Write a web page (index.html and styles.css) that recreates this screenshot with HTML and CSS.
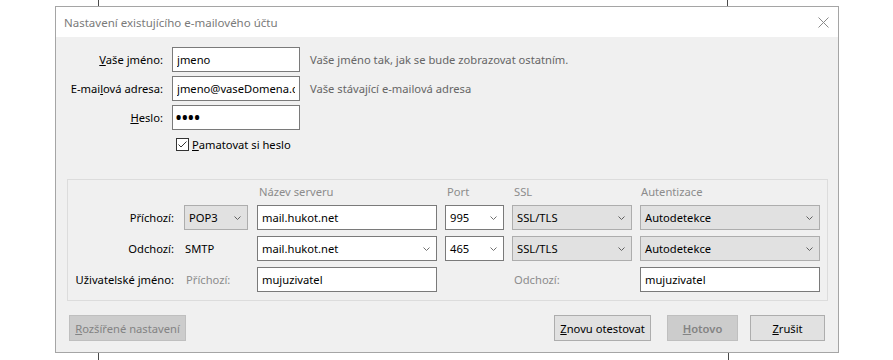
FILE: index.html
```html
<!DOCTYPE html>
<html lang="cs">
<head>
    <meta charset="UTF-8">
    <title>Nastavení existujícího e-mailového účtu</title>
    <link rel="stylesheet" href="styles.css">
</head>
<body>
    <div class="dialog">
        <div class="titlebar">
            <span class="title">Nastavení existujícího e-mailového účtu</span>
            <svg class="close" width="11" height="11" viewBox="0 0 11 11">
                <path d="M0.5 0.5 L10.5 10.5 M10.5 0.5 L0.5 10.5" stroke="#8a8a8a" stroke-width="1" fill="none"/>
            </svg>
        </div>
        <div class="content">
            <div class="account">
                <label class="label"><u>V</u>aše jméno:</label>
                <input class="field" type="text" value="jmeno">
                <span class="hint">Vaše jméno tak, jak se bude zobrazovat ostatním.</span>

                <label class="label">E-mai<u>l</u>ová adresa:</label>
                <input class="field" type="text" value="jmeno@vaseDomena.cz">
                <span class="hint">Vaše stávající e-mailová adresa</span>

                <label class="label"><u>H</u>eslo:</label>
                <input class="field password" type="password" value="1234">
                <span></span>

                <span></span>
                <label class="remember">
                    <span class="check">
                        <svg width="11" height="11" viewBox="0 0 11 11">
                            <path d="M1.5 5.5 L4 8 L9.5 2.5" stroke="#333" stroke-width="1" fill="none"/>
                        </svg>
                    </span>
                    <span><u>P</u>amatovat si heslo</span>
                </label>
                <span></span>
            </div>

            <div class="servers">
                <span></span>
                <span></span>
                <span class="head">Název serveru</span>
                <span class="head">Port</span>
                <span class="head">SSL</span>
                <span class="head auth">Autentizace</span>

                <span class="row-label">Příchozí:</span>
                <div class="select narrow">POP3<svg class="chevron" width="7" height="4" viewBox="0 0 7 4"><path d="M0.5 0.5 L3.5 3.5 L6.5 0.5" stroke="#606060" fill="none"/></svg></div>
                <input class="field" type="text" value="mail.hukot.net">
                <div class="select combo">995<svg class="chevron" width="7" height="4" viewBox="0 0 7 4"><path d="M0.5 0.5 L3.5 3.5 L6.5 0.5" stroke="#606060" fill="none"/></svg></div>
                <div class="select">SSL/TLS<svg class="chevron" width="7" height="4" viewBox="0 0 7 4"><path d="M0.5 0.5 L3.5 3.5 L6.5 0.5" stroke="#606060" fill="none"/></svg></div>
                <div class="select">Autodetekce<svg class="chevron" width="7" height="4" viewBox="0 0 7 4"><path d="M0.5 0.5 L3.5 3.5 L6.5 0.5" stroke="#606060" fill="none"/></svg></div>

                <span class="row-label">Odchozí:</span>
                <span class="plain">SMTP</span>
                <div class="select combo">mail.hukot.net<svg class="chevron" width="7" height="4" viewBox="0 0 7 4"><path d="M0.5 0.5 L3.5 3.5 L6.5 0.5" stroke="#606060" fill="none"/></svg></div>
                <div class="select combo">465<svg class="chevron" width="7" height="4" viewBox="0 0 7 4"><path d="M0.5 0.5 L3.5 3.5 L6.5 0.5" stroke="#606060" fill="none"/></svg></div>
                <div class="select">SSL/TLS<svg class="chevron" width="7" height="4" viewBox="0 0 7 4"><path d="M0.5 0.5 L3.5 3.5 L6.5 0.5" stroke="#606060" fill="none"/></svg></div>
                <div class="select">Autodetekce<svg class="chevron" width="7" height="4" viewBox="0 0 7 4"><path d="M0.5 0.5 L3.5 3.5 L6.5 0.5" stroke="#606060" fill="none"/></svg></div>

                <span class="row-label">Uživatelské jméno:</span>
                <span class="plain muted">Příchozí:</span>
                <input class="field" type="text" value="mujuzivatel">
                <span></span>
                <span class="plain muted">Odchozí:</span>
                <input class="field" type="text" value="mujuzivatel">
            </div>

            <div class="actions">
                <button class="btn btn-advanced" disabled><u>R</u>ozšířené nastavení</button>
                <div class="actions-right">
                    <button class="btn btn-retest"><u>Z</u>novu otestovat</button>
                    <button class="btn btn-done" disabled><u>H</u>otovo</button>
                    <button class="btn btn-cancel"><u>Z</u>rušit</button>
                </div>
            </div>
        </div>
    </div>
</body>
</html>
```

FILE: styles.css
```css
html {
    height: 100%;
}
body {
    margin: 0;
    padding: 6px 0 0 55px;
    min-height: 100%;
    box-sizing: border-box;
    font-family: "Noto Sans", "Open Sans", sans-serif;
    font-size: 11.2px;
    line-height: 15px;
    color: #000;
    background-color: #fff;
    background-image:
        linear-gradient(#4a4a4a, #4a4a4a),
        linear-gradient(#4a4a4a, #4a4a4a),
        linear-gradient(#4a4a4a, #4a4a4a),
        linear-gradient(#4a4a4a, #4a4a4a);
    background-position: 98px 0, 727px 0, 98px 353px, 728px 353px;
    background-size: 1px 6px, 1px 6px, 1px 7px, 1px 7px;
    background-repeat: no-repeat;
}
.dialog {
    width: 782px;
    height: 345px;
    border: 1px solid #a5a5a5;
    background: #f0f0f0;
    display: flex;
    flex-direction: column;
}
.titlebar {
    height: 30px;
    background: #fff;
    display: flex;
    align-items: center;
    justify-content: space-between;
    padding: 0 9px 0 8px;
}
.title {
    color: #7a7a7a;
    font-size: 11.5px;
}
.content {
    display: flex;
    flex-direction: column;
}

/* account rows */
.account {
    display: grid;
    grid-template-columns: 107px 128px 1fr;
    grid-template-rows: 25px 25px 25px 20px;
    column-gap: 9px;
    row-gap: 4px;
    padding-top: 10px;
}
.label {
    text-align: right;
    align-self: center;
}
.hint {
    color: #666;
    align-self: center;
    padding-left: 1px;
}
.field {
    box-sizing: border-box;
    width: 100%;
    height: 25px;
    margin: 0;
    border: 1px solid #7a7a7a;
    border-radius: 0;
    padding: 0 4px;
    background: #fff;
    font: inherit;
    color: #000;
    outline: none;
}
.password {
    font-size: 19px;
    letter-spacing: -1px;
    padding-left: 2px;
}
.remember {
    display: flex;
    align-items: center;
    gap: 3px;
    padding-left: 4px;
}
.check {
    box-sizing: border-box;
    width: 13px;
    height: 13px;
    border: 1px solid #333;
    background: #fff;
    display: flex;
}

/* server group */
.servers {
    margin: 25px 10px 0 11px;
    border: 1px solid #dcdcdc;
    padding-bottom: 8px;
    display: grid;
    grid-template-columns: 108px 65px 180px 59px 120px 180px;
    grid-template-rows: 19px 25px 25px 25px;
    column-gap: 8px;
    row-gap: 6px;
}
.head {
    color: #8c8c8c;
    align-self: end;
    padding-left: 2px;
    line-height: 14px;
}
.head.auth {
    padding-left: 1px;
}
.row-label {
    text-align: right;
    padding-right: 2px;
    align-self: center;
}
.plain {
    align-self: center;
    padding-left: 1px;
}
.muted {
    color: #8c8c8c;
    padding-left: 2px;
}
.select {
    box-sizing: border-box;
    height: 25px;
    border: 1px solid #adadad;
    background: #e1e1e1;
    display: flex;
    align-items: center;
    justify-content: space-between;
    padding: 0 6px 0 4px;
}
.narrow {
    width: 64px;
}
.combo {
    border-color: #7a7a7a;
    background: #fff;
}
.combo .chevron path {
    stroke: #707070;
}

/* buttons */
.actions {
    display: flex;
    margin-top: 14px;
    padding: 0 13px;
}
.actions-right {
    display: flex;
    margin-left: auto;
}
.btn {
    box-sizing: border-box;
    height: 26px;
    margin: 0;
    padding: 0;
    border: 1px solid #adadad;
    border-radius: 0;
    background: #e1e1e1;
    font: inherit;
    color: #000;
}
.btn:disabled {
    background: #cccccc;
    border-color: #bfbfbf;
    color: #838383;
}
.btn-advanced {
    width: 117px;
}
.btn-retest {
    width: 97px;
    margin-right: 16px;
}
.btn-done {
    width: 71px;
    margin-right: 12px;
    font-weight: 600;
}
.btn-cancel {
    width: 75px;
}
```
